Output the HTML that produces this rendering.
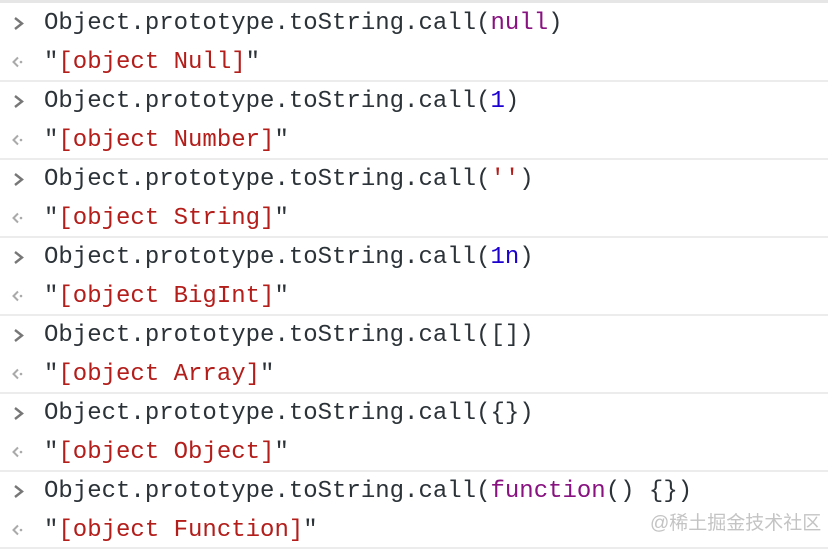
<!DOCTYPE html>
<html><head><meta charset="utf-8"><style>
html,body{margin:0;padding:0;background:#fff;width:828px;height:556px;overflow:hidden;position:relative}
.top{position:absolute;left:0;top:0;width:828px;height:3px;background:#e6e6e6}
.sep{position:absolute;left:0;width:828px;height:2px;background:#ececec}
.l{position:absolute;left:44px;height:39px;line-height:41px;font-family:"Liberation Mono",monospace;font-size:24px;color:#2b3238;white-space:pre}
.ic{position:absolute;left:10px;width:20px;height:39px}
.s{color:#b31d1a}
.k{color:#881280}
.n{color:#1c00cf}
.wm{position:absolute;left:650px;top:508px;font-family:"Liberation Sans","Noto Sans CJK SC",sans-serif;font-size:19px;color:#c4c4c4}
.bot{position:absolute;left:0;top:547px;width:828px;height:2px;background:#ececec}
</style></head><body>
<div class="top"></div>
<div class="sep" style="top:80px"></div>
<div class="sep" style="top:158px"></div>
<div class="sep" style="top:236px"></div>
<div class="sep" style="top:314px"></div>
<div class="sep" style="top:392px"></div>
<div class="sep" style="top:470px"></div>
<div class="bot"></div>

<svg width="0" height="0" style="position:absolute"><defs>
<g id="gt"><path d="M5 15 L12 20.5 L5 26" stroke="#777" stroke-width="2.4" fill="none"/></g>
<g id="lt"><path d="M8 15.5 L3.5 20 L8 24.5" stroke="#aaa" stroke-width="2" fill="none"/><circle cx="11" cy="20" r="1.3" fill="#aaa"/></g>
</defs></svg>

<svg class="ic" style="top:3px"><use href="#gt"/></svg>
<div class="l" style="top:3px">Object.prototype.toString.call(<span class="k">null</span>)</div>
<svg class="ic" style="top:42px"><use href="#lt"/></svg>
<div class="l" style="top:42px">"<span class="s">[object Null]</span>"</div>

<svg class="ic" style="top:81px"><use href="#gt"/></svg>
<div class="l" style="top:81px">Object.prototype.toString.call(<span class="n">1</span>)</div>
<svg class="ic" style="top:120px"><use href="#lt"/></svg>
<div class="l" style="top:120px">"<span class="s">[object Number]</span>"</div>

<svg class="ic" style="top:159px"><use href="#gt"/></svg>
<div class="l" style="top:159px">Object.prototype.toString.call(<span class="s">''</span>)</div>
<svg class="ic" style="top:198px"><use href="#lt"/></svg>
<div class="l" style="top:198px">"<span class="s">[object String]</span>"</div>

<svg class="ic" style="top:237px"><use href="#gt"/></svg>
<div class="l" style="top:237px">Object.prototype.toString.call(<span class="n">1n</span>)</div>
<svg class="ic" style="top:276px"><use href="#lt"/></svg>
<div class="l" style="top:276px">"<span class="s">[object BigInt]</span>"</div>

<svg class="ic" style="top:315px"><use href="#gt"/></svg>
<div class="l" style="top:315px">Object.prototype.toString.call([])</div>
<svg class="ic" style="top:354px"><use href="#lt"/></svg>
<div class="l" style="top:354px">"<span class="s">[object Array]</span>"</div>

<svg class="ic" style="top:393px"><use href="#gt"/></svg>
<div class="l" style="top:393px">Object.prototype.toString.call({})</div>
<svg class="ic" style="top:432px"><use href="#lt"/></svg>
<div class="l" style="top:432px">"<span class="s">[object Object]</span>"</div>

<svg class="ic" style="top:471px"><use href="#gt"/></svg>
<div class="l" style="top:471px">Object.prototype.toString.call(<span class="k">function</span>() {})</div>
<svg class="ic" style="top:510px"><use href="#lt"/></svg>
<div class="l" style="top:510px">"<span class="s">[object Function]</span>"</div>

<div class="wm">@稀土掘金技术社区</div>
</body></html>
